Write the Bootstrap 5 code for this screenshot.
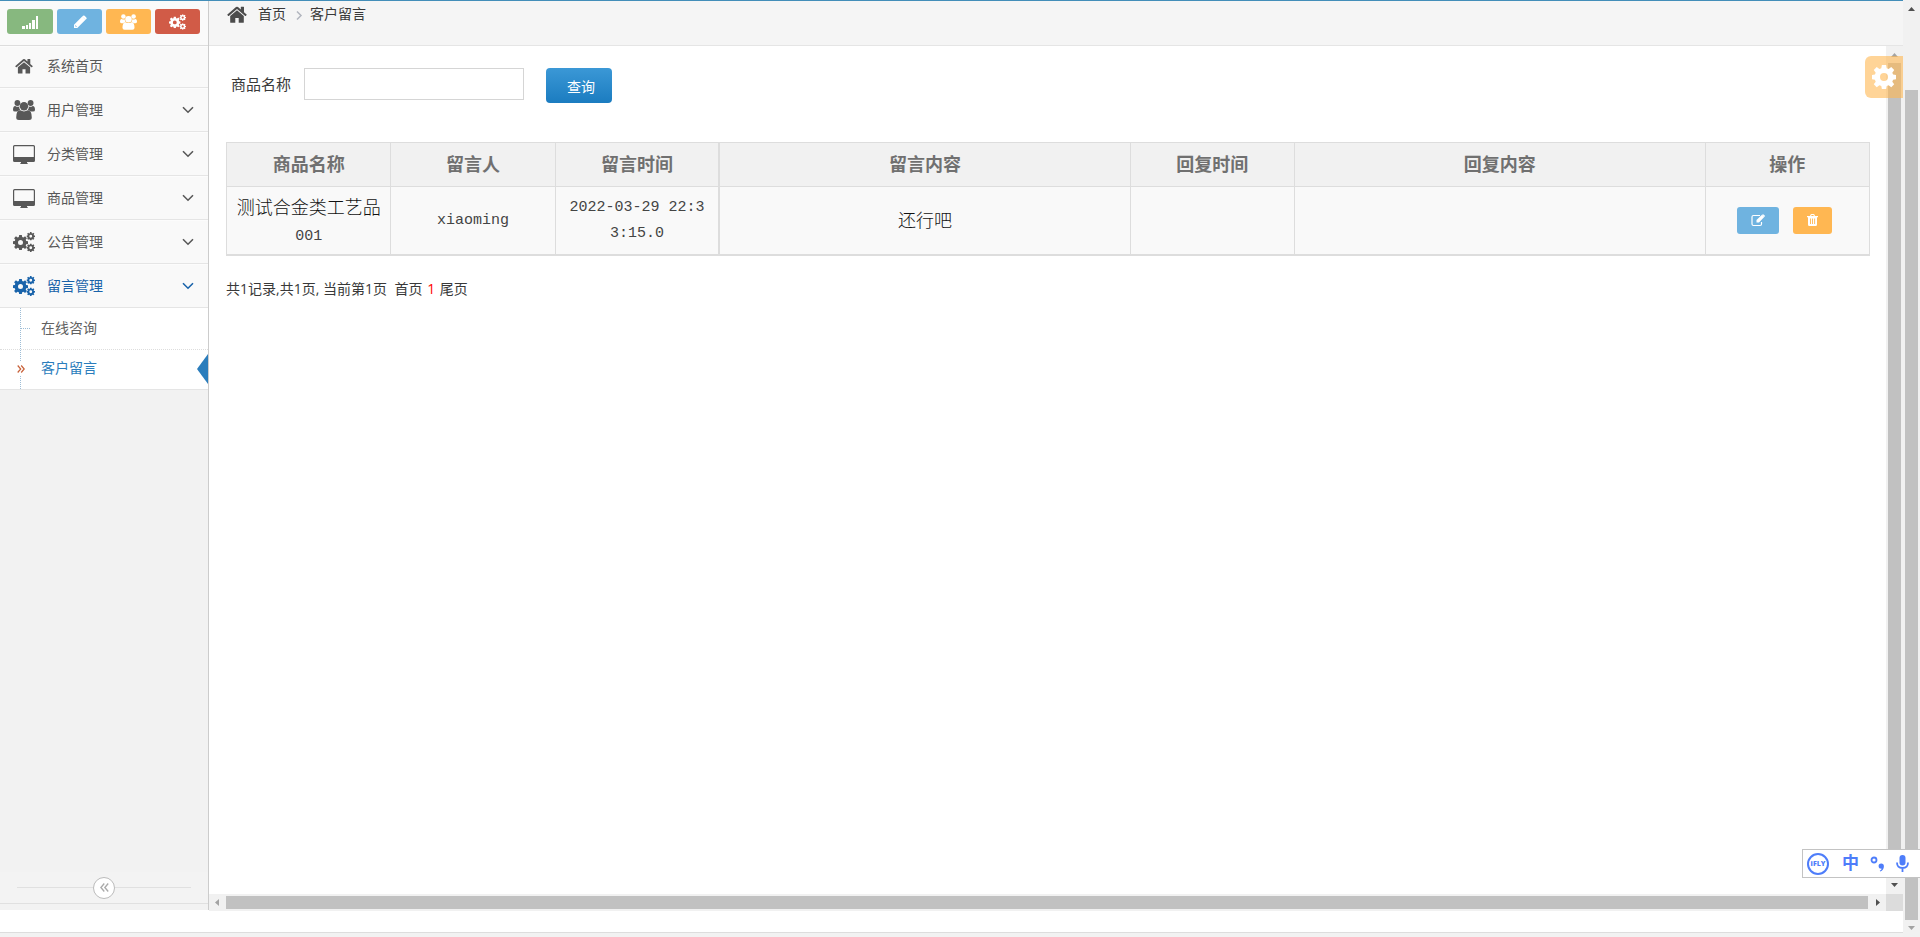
<!DOCTYPE html>
<html lang="zh-CN">
<head>
<meta charset="utf-8">
<meta name="viewport" content="width=device-width, initial-scale=1">
<title>客户留言</title>
<link href="https://cdn.jsdelivr.net/npm/bootstrap@5.3.0/dist/css/bootstrap.min.css" rel="stylesheet">
<script defer src="https://cdn.jsdelivr.net/npm/bootstrap@5.3.0/dist/js/bootstrap.bundle.min.js"></script>
<style>
body{font-family:"Open Sans","Noto Sans CJK SC",sans-serif;font-size:14px;line-height:20px;color:#393939;background:#fff;font-weight:400}
svg{display:block;fill:currentColor}
a{text-decoration:none;color:inherit}
.app-shell{height:100vh}
.fit-x{min-width:0}
.fit-y{min-height:0}
.top-line{height:1px;background:#438eb9}
.app-foot{height:5px;background:#f2f2f2;border-top:1px solid #ddd}
.page-gap{height:21px}
.side{width:209px;margin-bottom:1px;background:#f2f2f2;border-right:1px solid #ccc}
.side-end{height:6px}
.quick{height:45px;padding:8px 8px 0 7px;gap:4px;background:#fafafa;border-bottom:1px solid #ddd}
.quick .btn{flex:1 1 0;height:25px;border:0;border-radius:3px;color:#fff;padding:0}
.quick .b-green{flex-basis:1px}
.b-green{background:#87b87f!important}.b-blue{background:#6fb3e0!important}.b-orange{background:#ffb752!important}.b-red{background:#d15b47!important}
.menu-item{height:44px;padding:0 14px 0 13px;background:#f9f9f9;border-top:1px solid #fcfcfc;border-bottom:1px solid #e5e5e5;color:#585858}
.menu-item.first{height:42px;padding-bottom:2px}
.menu-item.open{color:#1963aa}
.menu-icon{width:22px;margin-right:12px}
.sub{background:#fff;border-bottom:1px solid #e5e5e5;position:relative}
.sub::before{content:"";position:absolute;left:20px;top:0;bottom:0;border-left:1px dotted #9dbdd6}
.sub a{display:flex;align-items:center;height:41px;padding:0 0 2px 41px;color:#616161;position:relative}
.sub a+a{height:40px;padding-bottom:4px;border-top:1px dotted #ddd;color:#2b7dbc}
.sub .tick{position:absolute;left:21px;top:20px;width:9px;border-top:1px dotted #9dbdd6}
.sub .now{position:absolute;left:14px;top:12px;padding:3px;background:#fff;color:#c86139}
.sub .arrow{position:absolute;right:0;top:4px;color:#2b7dbc}
.collapse-bar{height:32px;padding:0 17px;background:#f3f3f3;border-bottom:1px solid #e0e0e0}
.collapse-bar span{height:1px;background:#e0e0e0}
.collapse-bar button{width:22px;height:22px;border:1px solid #bbb;border-radius:50%;background:#fff;color:#aaa;padding:0}
.crumb{height:45px;background:#f5f5f5;border-bottom:1px solid #e5e5e5;padding:0 18px}
.crumb nav{height:26px}
.crumb .home{margin-right:11px;color:#4c4c4c}
.crumb .sep{margin:3px 6px 0 8px;color:#b2b6bf}
.frame{padding:22px 16px 0 17px}
.query label{font-size:15px;margin-left:5px;width:73px;padding-bottom:3px}
.query input{width:220px;height:32px;border:1px solid #d5d5d5;border-radius:0}
.query .btn{width:66px;height:35px;margin-left:22px;border:0;border-radius:4px;color:#fff;font-size:14px;padding:2px 0 0 4px;background:linear-gradient(#3b98d6,#1b7cc0)}
.msgs{table-layout:fixed;margin:39px 0 23px;border:1px solid #ddd;border-bottom-width:2px;text-align:center}
.msgs .tenth{width:10%}
.msgs .quarter{width:25%}
.msgs th{height:44px;padding:0 0 2px;font-size:18px;line-height:26px;color:#707070;background:#f1f1f1;border:1px solid #ddd}
.msgs td{height:68px;padding:6px 8px;font-size:18px;line-height:26px;font-weight:300;color:#111;background:#f9f9f9;border:1px solid #ddd;word-break:break-all}
.msgs .wide-edge{border-right-width:2px}
.mono{font-family:"Liberation Mono",monospace;font-size:15px;font-weight:400;line-height:20px;color:#444}
.msgs td.mono{font-family:"Liberation Mono",monospace;font-size:15px;font-weight:400;color:#444;padding-top:8px}
.msgs .btn{height:27px;border:0;border-radius:3px;color:#fff;padding:0}
.acts{gap:14px;margin-right:6px}
.acts .b-blue{width:42px}
.acts .b-orange{width:39px}
.pager .start{margin-left:4px}
.pager .cur{margin:0 1px;color:#f00}
.sb{background:#f1f1f1;color:#505050;width:17px;padding:0 2px}
.sb i,.sbh i{display:block;background:#c1c1c1}
.sb .page-thumb{margin-top:73px}
.dim{color:#a3a3a3}
.dark{color:#505050}
.arr{height:17px;width:13px}
.sbh{height:17px;background:#f1f1f1;padding:2px 0}
.corner{width:17px;background:#dcdcdc}
.gear-tab{position:fixed;right:17px;top:56px;width:38px;height:42px;border:0;border-radius:6px 0 0 6px;background:rgba(255,183,82,.6);color:#fff;padding:0 0 0 7px;z-index:2}
.ime{position:fixed;right:0;bottom:59px;width:118px;height:29px;padding:0 11px 0 4px;border:1px solid #c3c3c3;border-right:0;background:#fff;color:#4e7dfa;z-index:3}
.ime .logo{width:22px;height:22px;border:2px solid #4e7dfa;border-radius:50%;font-size:7px;font-weight:800;line-height:18px;text-align:center}
.ime .lang{font-size:17px;font-weight:700;line-height:24px;padding-bottom:2px;margin-left:2px}
</style>
</head>
<body>
<svg width="0" height="0" class="position-absolute" aria-hidden="true">
<symbol id="home" viewBox="0 0 20 17"><path d="M10 4.2 3.2 10v6.2q0 .6.6.6h4.5v-4.8h3.4v4.8h4.5q.6 0 .6-.6V10zM19.6 8.4 17 6.2V1.1q0-.4-.4-.4h-2.4q-.4 0-.4.4v2.4L11 1.1q-1-.8-2 0L.4 8.4q-.3.3 0 .6l.8.9q.3.2.6 0L10 3l8.2 6.9q.3.2.6 0l.8-.9q.3-.3 0-.6z"/></symbol>
<symbol id="users" viewBox="0 0 22 20"><circle cx="4.4" cy="3" r="2.9"/><circle cx="17.6" cy="3" r="2.9"/><circle cx="11" cy="6.3" r="4.2"/><path d="M0 10q0-4 2.2-4 2.1 1.3 4 .6Q6 8.600 7.200 10 5.500 10 4.200 11.500H2Q0 11.500 0 10zM22 10q0-4-2.200-4-2.100 1.300-4 .6.2 2-1 3.400 1.700 0 3 1.500h2.200q2 0 2-1.500zM3.200 17.500q0-7.200 4.100-7.200Q11 12.600 14.700 10.300q4.100 0 4.100 7.200 0 2.500-2.700 2.500H5.900q-2.700 0-2.700-2.500z"/></symbol>
<symbol id="monitor" viewBox="0 0 22 19"><path fill-rule="evenodd" d="M1.500 0h19Q22 0 22 1.500v14q0 1.500-1.500 1.500H14v.7l.7.500V19H7.300v-.8L8 17.700V17H1.500Q0 17 0 15.500v-14Q0 0 1.500 0zm.2 1.200q-.5 0-.5.5V12h19.600V1.700q0-.5-.5-.5z"/></symbol>
<symbol id="gear" viewBox="0 0 24 24"><path fill-rule="evenodd" d="M9.900 0h4.200l.6 3.200 1.900.8 2.700-1.900 2.900 2.900-1.900 2.700.8 1.900 3.100.5v4.100l-3.100.6-.8 1.900 1.900 2.600-2.900 2.900-2.700-1.900-1.900.8-.6 3.100H9.900l-.6-3.100-1.900-.8-2.700 1.900-2.900-2.900 1.900-2.600-.8-1.900L0 14.200v-4.100l2.900-.5.8-1.900L1.800 5l2.900-2.900L7.400 4l1.900-.8zM12 8a4 4 0 1 0 0 8 4 4 0 0 0 0-8z"/></symbol>
<symbol id="gears" viewBox="0 0 22 20"><use href="#gear" x="0" y="3" width="15" height="15"/><use href="#gear" x="13.500" y="0" width="8.500" height="8.500"/><use href="#gear" x="13.500" y="11.500" width="8.500" height="8.500"/></symbol>
<symbol id="chev" viewBox="0 0 12 8"><path d="m1 1.200 5 5 5-5" fill="none" stroke="currentColor" stroke-width="1.600"/></symbol>
<symbol id="dbl" viewBox="0 0 8 8"><path d="m.7.500 3 3.500-3 3.500M4.200.500l3 3.500-3 3.500" fill="none" stroke="currentColor" stroke-width="1.200"/></symbol>
</svg>
<div class="app-shell d-flex overflow-hidden">
 <div class="fit-x flex-grow-1 d-flex flex-column">
  <div class="top-line flex-shrink-0"></div>
  <div class="fit-y flex-grow-1 d-flex">
   <aside class="side d-flex flex-column flex-shrink-0">
    <div class="quick d-flex flex-shrink-0">
     <button class="btn b-green d-flex align-items-center justify-content-center" aria-label="统计"><svg width="17" height="14" viewBox="0 0 17 14"><path d="M0 11h3v3H0zM4 10h2v4H4zM7 8h2v6H7zM10 5h3v9h-3zM14 1h2v13h-2z"/></svg></button>
     <button class="btn b-blue d-flex align-items-center justify-content-center" aria-label="编辑"><svg width="14" height="14" viewBox="0 0 14 14"><path fill-rule="evenodd" d="M9.200 1.500 12.500 4.800 4.300 13H1V9.700zM2.300 10v1.200l.6.6h1.200L2.300 10zM10 .8q.8-.8 1.600 0l1.700 1.700q.8.800 0 1.600l-.6.600L9.300 1.400z"/></svg></button>
     <button class="btn b-orange d-flex align-items-center justify-content-center" aria-label="用户"><svg width="17" height="16"><use href="#users"/></svg></button>
     <button class="btn b-red d-flex align-items-center justify-content-center" aria-label="设置"><svg width="17" height="16"><use href="#gears"/></svg></button>
    </div>
    <nav aria-label="菜单">
     <a href="#" class="menu-item first d-flex align-items-center"><span class="menu-icon"><svg class="mx-auto" width="18" height="16"><use href="#home"/></svg></span>系统首页</a>
     <a href="#" class="menu-item d-flex align-items-center"><span class="menu-icon"><svg width="22" height="20"><use href="#users"/></svg></span>用户管理<svg class="ms-auto" width="12" height="8"><use href="#chev"/></svg></a>
     <a href="#" class="menu-item d-flex align-items-center"><span class="menu-icon"><svg width="22" height="19"><use href="#monitor"/></svg></span>分类管理<svg class="ms-auto" width="12" height="8"><use href="#chev"/></svg></a>
     <a href="#" class="menu-item d-flex align-items-center"><span class="menu-icon"><svg width="22" height="19"><use href="#monitor"/></svg></span>商品管理<svg class="ms-auto" width="12" height="8"><use href="#chev"/></svg></a>
     <a href="#" class="menu-item d-flex align-items-center"><span class="menu-icon"><svg width="22" height="20"><use href="#gears"/></svg></span>公告管理<svg class="ms-auto" width="12" height="8"><use href="#chev"/></svg></a>
     <a href="#" class="menu-item open d-flex align-items-center"><span class="menu-icon"><svg width="22" height="20"><use href="#gears"/></svg></span>留言管理<svg class="ms-auto" width="12" height="8"><use href="#chev"/></svg></a>
     <div class="sub">
      <a href="#"><span class="tick"></span>在线咨询</a>
      <a href="#"><span class="now"><svg width="8" height="8"><use href="#dbl"/></svg></span>客户留言<svg class="arrow" width="11" height="30" viewBox="0 0 11 30"><path d="M11 0v30L0 15z"/></svg></a>
     </div>
    </nav>
    <div class="collapse-bar mt-auto d-flex align-items-center"><span class="flex-fill"></span><button class="d-flex align-items-center justify-content-center" aria-label="收起"><svg width="9" height="9" viewBox="0 0 8 8"><path d="M7.300.5l-3 3.500 3 3.500M3.800.5l-3 3.500 3 3.500" fill="none" stroke="currentColor" stroke-width="1.200"/></svg></button><span class="flex-fill"></span></div>
    <div class="side-end"></div>
   </aside>
   <div class="fit-x flex-grow-1 d-flex flex-column">
    <div class="crumb flex-shrink-0"><nav class="d-flex align-items-center" aria-label="位置"><svg class="home" width="20" height="17"><use href="#home"/></svg><a href="#">首页</a><svg class="sep" width="10" height="9" viewBox="0 0 10 9"><path d="m3 .5 4 4-4 4" fill="none" stroke="currentColor" stroke-width="1.500"/></svg><span>客户留言</span></nav></div>
    <div class="fit-y flex-grow-1 d-flex">
     <main class="frame fit-x flex-grow-1">
      <form class="query d-flex align-items-start"><label for="q" class="align-self-center">商品名称</label><input id="q" type="text"><button type="button" class="btn">查询</button></form>
      <table class="table msgs">
       <colgroup><col class="tenth"><col class="tenth"><col class="tenth"><col class="quarter"><col class="tenth"><col class="quarter"><col class="tenth"></colgroup>
       <thead><tr class="align-middle"><th>商品名称</th><th>留言人</th><th class="wide-edge">留言时间</th><th>留言内容</th><th>回复时间</th><th>回复内容</th><th>操作</th></tr></thead>
       <tbody><tr class="align-middle"><td>测试合金类工艺品<span class="mono">001</span></td><td class="mono">xiaoming</td><td class="mono wide-edge">2022-03-29 22:33:15.0</td><td>还行吧</td><td></td><td></td>
       <td><div class="acts d-flex justify-content-center"><button class="btn b-blue d-flex align-items-center justify-content-center" aria-label="编辑"><svg width="14" height="13" viewBox="0 0 14 13"><path d="M9 1.500H2.500Q1 1.500 1 3v7q0 1.500 1.500 1.500h6.500q1.500 0 1.500-1.500V8" fill="none" stroke="currentColor" stroke-width="1.200"/><path d="M11 .8 13.200 3 8 8.500H5.500V6zM11.500.4q.5-.5 1 0l1.200 1.200q.5.500 0 1l-.3.300-2.200-2.200z"/></svg></button><button class="btn b-orange d-flex align-items-center justify-content-center" aria-label="删除"><svg width="11" height="12" viewBox="0 0 11 12"><path fill-rule="evenodd" d="M0 2h3l.6-1.400Q3.800 0 4.500 0h2q.7 0 .9.600L8 2h3v1.200h-1v7.300q0 1.500-1.300 1.500H2.300Q1 12 1 10.500V3.200H0zm4.200 0h2.600l-.4-.9H4.600zM3 4.500v5.500h.9V4.500zm2.100 0v5.500h.9V4.500zm2.100 0v5.500h.9V4.500z"/></svg></button></div></td></tr></tbody>
      </table>
      <div class="pager">共1记录,共1页, 当前第1页 <a href="#" class="start">首页</a> <span class="cur">1</span> <a href="#">尾页</a></div>
     </main>
     <div class="sb d-flex flex-column"><svg class="arr dim" viewBox="0 0 13 17"><path d="M3 11h7L6.500 7z"/></svg><i class="flex-fill"></i><svg class="arr mt-3" viewBox="0 0 13 17"><path d="M3 6h7L6.500 10z"/></svg></div>
    </div>
    <div class="d-flex flex-shrink-0"><div class="sbh d-flex flex-grow-1"><svg class="dim" width="17" height="13" viewBox="0 0 17 13"><path d="M10 3v7L6 6.500z"/></svg><i class="flex-fill"></i><svg class="dark" width="18" height="13" viewBox="0 0 18 13"><path d="M8 3v7l4-3.500z"/></svg></div><div class="corner"></div></div>
   </div>
  </div>
  <div class="page-gap flex-shrink-0"></div><div class="app-foot flex-shrink-0"></div>
 </div>
 <div class="sb d-flex flex-column flex-shrink-0"><svg class="arr" viewBox="0 0 13 17"><path d="M3 11h7L6.500 7z"/></svg><i class="page-thumb flex-fill"></i><svg class="arr dim" viewBox="0 0 13 17"><path d="M3 6h7L6.500 10z"/></svg></div>
</div>
<button class="gear-tab" aria-label="设置"><svg width="24" height="24"><use href="#gear"/></svg></button>
<div class="ime d-flex align-items-center justify-content-between"><span class="logo">iFLY</span><span class="lang">中</span>
<svg width="15" height="16" viewBox="0 0 15 16"><circle cx="4" cy="4" r="2.500" fill="none" stroke="currentColor" stroke-width="1.800"/><path d="M11.200 7.500a2.700 2.700 0 0 1 2.700 2.700q0 4-3.700 5.300l-.4-.8q1.700-.8 1.900-2-3.100 0-3.100-2.500a2.600 2.600 0 0 1 2.600-2.700z"/></svg>
<svg width="13" height="17" viewBox="0 0 13 17"><rect x="3.500" y="0" width="6" height="10.500" rx="3"/><path d="M1 7.500q0 5.500 5.500 5.500T12 7.500M6.500 13v4" fill="none" stroke="currentColor" stroke-width="1.800"/></svg></div>
</body>
</html>
